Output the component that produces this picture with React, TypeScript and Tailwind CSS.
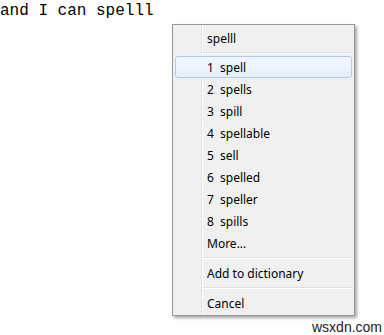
import React from "react";

const items = ["spell", "spells", "spill", "spellable", "sell", "spelled", "speller", "spills"];

function Sep() {
  return (
    <div className="ml-[28px] mr-[1px] my-[3px] h-[2px] flex flex-col">
      <div className="h-px bg-[#e0e0e0]" />
      <div className="h-px bg-white" />
    </div>
  );
}

function Row({ children, active }: { children: React.ReactNode; active?: boolean }) {
  return (
    <div
      className={
        "relative z-10 mx-[2px] h-[22px] flex items-center pl-[31px] pt-px rounded-[3px] border " +
        (active
          ? "border-[#aecbee] bg-gradient-to-b from-[#f3f8fd] to-[#e5eefa]"
          : "border-transparent")
      }
    >
      {children}
    </div>
  );
}

export default function App() {
  return (
    <div
      className="relative w-[384px] h-[335px] bg-white overflow-hidden"
      style={{ fontFamily: "'Noto Sans', sans-serif" }}
    >
      <p
        className="text-[16px] leading-[23px] text-black whitespace-pre"
        style={{ fontFamily: "'Liberation Mono', monospace" }}
      >
        and I can spelll
      </p>

      <div className="absolute left-[172px] top-[24px] w-[183px] h-[292px] bg-[#f0f0f0] border border-[#979797] shadow-[2px_2px_3px_rgba(0,0,0,0.35)] text-[12px] text-black">
        <div className="absolute left-[28px] top-0 bottom-0 w-[2px] flex">
          <div className="w-px bg-[#e2e3e3]" />
          <div className="w-px bg-white" />
        </div>
        <div className="relative z-10 h-[27px] flex items-center pl-[34px] pt-px">spelll</div>
        <div className="relative z-10 ml-[28px] h-[2px] flex flex-col mb-[2px]">
          <div className="h-px bg-[#e0e0e0]" />
          <div className="h-px bg-white" />
        </div>
        {items.map((w, i) => (
          <Row key={w} active={i === 0}>
            <span className="w-[13px] shrink-0">{i + 1}</span>
            <span>{w}</span>
          </Row>
        ))}
        <Row>More...</Row>
        <Sep />
        <Row>Add to dictionary</Row>
        <Sep />
        <Row>Cancel</Row>
      </div>

      <div
        className="absolute left-[312px] top-[319px] text-[14px] leading-[16px] text-[#222]"
        style={{ fontFamily: "'Liberation Sans', sans-serif" }}
      >
        wsxdn.com
      </div>
    </div>
  );
}
